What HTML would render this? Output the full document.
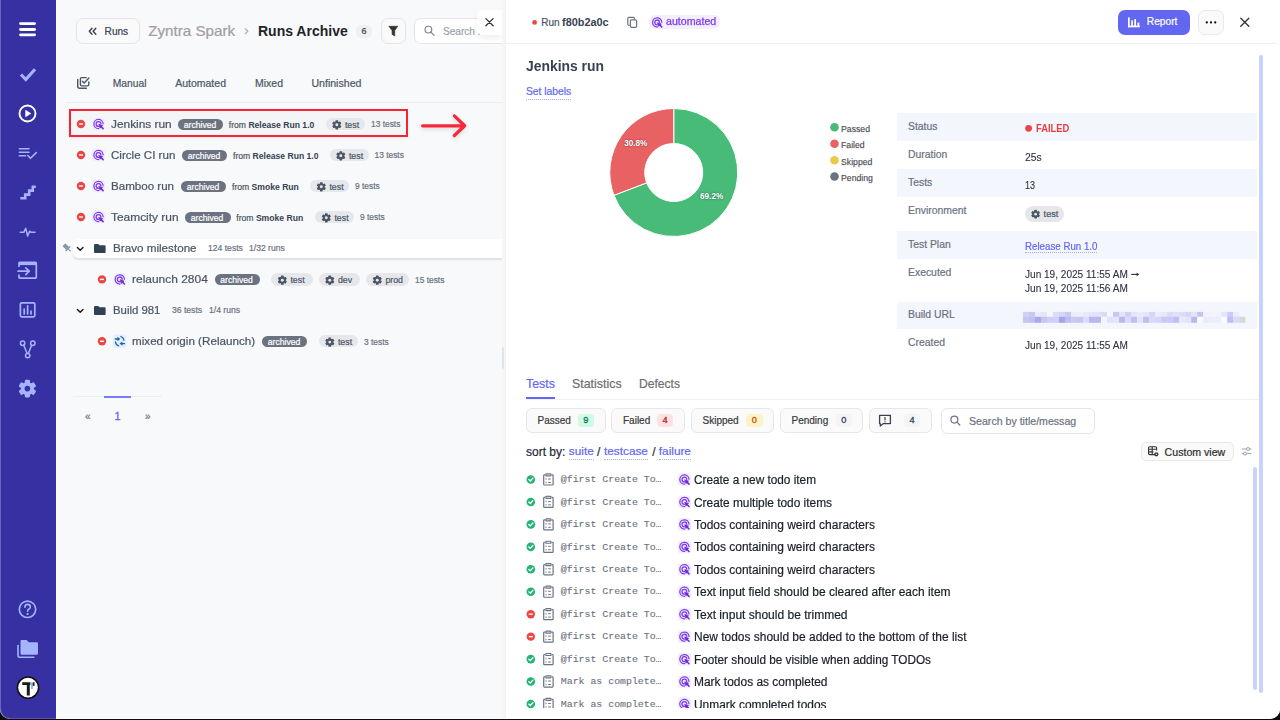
<!DOCTYPE html>
<html><head><meta charset="utf-8">
<style>
*{margin:0;padding:0;box-sizing:border-box}
html,body{width:1280px;height:720px;overflow:hidden;background:#0d0d0d;font-family:"Liberation Sans",sans-serif}
#win{position:absolute;left:0;top:0;width:1280px;height:719px;background:#f8f9fb;border-radius:0 0 10px 10px;overflow:hidden}
.a{position:absolute;white-space:nowrap;line-height:1;-webkit-text-stroke:0.2px currentColor}
svg{position:absolute;overflow:visible}
#side{position:absolute;left:0;top:0;width:56px;height:719px;background:#3730a3;border-left:1px solid #6a63c0;border-bottom:1px solid #5a52b8;border-bottom-left-radius:10px}
#sidee{position:absolute;left:56px;top:0;width:1px;height:719px;background:#fdfdff}
#right{position:absolute;left:505px;top:0;width:775px;height:719px;background:#fff;border-left:1px solid #f3f3f4}
</style></head><body>
<div id="win">
<div id="left">
<div class="a" style="left:76px;top:18px;width:64px;height:26px;border:1px solid #e4e5e8;border-radius:7px;background:#fafafa"></div>
<svg style="left:0;top:0" width="1" height="1"><path d="M92 28.3L89.3 31.3L92 34.3M95.8 28.3L93.1 31.3L95.8 34.3" fill="none" stroke="#374151" stroke-width="1.4" stroke-linecap="round" stroke-linejoin="round"/></svg>
<div class="a" style="left:104.60px;top:26.75px;font-size:10.1px;color:#374151;font-weight:400;">Runs</div>
<div class="a" style="left:148.20px;top:23.10px;font-size:15.2px;color:#a0a0a0;font-weight:400;">Zyntra Spark</div>
<svg style="left:0;top:0" width="1" height="1"><path d="M245.3 28.9L247.8 31.3L245.3 33.7" fill="none" stroke="#9ca3af" stroke-width="1.1" stroke-linecap="round"/></svg>
<div class="a" style="left:258.00px;top:24.28px;font-size:14px;color:#222327;font-weight:700;-webkit-text-stroke:0;">Runs Archive</div>
<div class="a" style="left:356px;top:24.5px;width:16px;height:13.299999999999997px;background:#eff0f2;border-radius:5px"></div>
<div class="a" style="left:361.60px;top:27.28px;font-size:9px;color:#374151;font-weight:400;">6</div>
<div class="a" style="left:381px;top:18px;width:25px;height:26px;border:1px solid #e4e5e8;border-radius:7px;background:#fafafa"></div>
<svg style="left:0;top:0" width="1" height="1"><path d="M388.9 26.3H397.7L394.7 30.6V36L392.1 34.4V30.6Z" fill="#333" stroke="#333" stroke-width="0.7" stroke-linejoin="round"/></svg>
<div class="a" style="left:414px;top:18px;width:106px;height:26px;border:1px solid #e4e5e8;border-radius:7px;background:#fff"></div>
<svg style="left:0;top:0" width="1" height="1"><circle cx="428.4" cy="29.6" r="3.4" fill="none" stroke="#7b8190" stroke-width="1.15"/><path d="M430.9 32.1L434.2 35.4" stroke="#7b8190" stroke-width="1.15" stroke-linecap="round"/></svg>
<div class="a" style="left:443.00px;top:27.15px;font-size:10.1px;color:#9ca3af;font-weight:400;">Search r</div>
<div class="a" style="left:477px;top:10px;width:25px;height:25px;background:#fff;border-radius:5px 0 0 5px;box-shadow:0 3px 6px rgba(0,0,0,0.07)"></div>
<svg style="left:0;top:0" width="1" height="1"><path d="M485.9 18.6L493.1 25.8M493.1 18.6L485.9 25.8" stroke="#333" stroke-width="1.3" stroke-linecap="round"/></svg>
<svg style="left:0;top:0" width="1" height="1"><g fill="none" stroke="#4b5563" stroke-width="1.4" stroke-linecap="round" stroke-linejoin="round"><path d="M77.7 79.5V86.3Q77.7 88.2 79.6 88.2H86.4"/><path d="M86.2 77.6H81.7Q80.4 77.6 80.4 78.9V84.6Q80.4 85.9 81.7 85.9H87.5Q88.8 85.9 88.8 84.6V82"/><path d="M82.4 81.2L84.2 83L88.9 78"/></g></svg>
<div class="a" style="left:112.80px;top:78.66px;font-size:10.3px;color:#4b5563;font-weight:400;">Manual</div>
<div class="a" style="left:175.20px;top:77.86px;font-size:10.5px;color:#4b5563;font-weight:400;">Automated</div>
<div class="a" style="left:255.00px;top:77.86px;font-size:10.5px;color:#4b5563;font-weight:400;">Mixed</div>
<div class="a" style="left:311.40px;top:77.81px;font-size:10.6px;color:#4b5563;font-weight:400;">Unfinished</div>
<div class="a" style="left:66px;top:102px;width:437px;height:1px;background:#eceef1"></div>
<div class="a" style="left:69px;top:109px;width:339px;height:28px;border:2.7px solid #f62236;background:#f4f5f7;box-shadow:0 1px 3px rgba(0,0,0,0.08)"></div>
<div class="a" style="left:111.40px;top:118.86px;font-size:10.7px;color:#4b5563;font-weight:400;transform-origin:0 0;transform:scaleX(1.1111);">Jenkins run</div>
<div class="a" style="left:178px;top:118.5px;width:45px;height:11.0px;background:#6b7280;border-radius:6px"></div>
<div class="a" style="left:183.80px;top:120.67px;font-size:8.6px;color:#fff;font-weight:400;">archived</div>
<div class="a" style="left:228.80px;top:120.57px;font-size:8.6px;color:#4b5563;font-weight:400;">from <b style="color:#374151;-webkit-text-stroke:0">Release Run 1.0</b></div>
<div class="a" style="left:325.5px;top:117.8px;width:39.0px;height:12.399999999999991px;background:#e5e7eb;border-radius:7px"></div>
<svg style="left:0;top:0" width="1" height="1"><g transform="translate(336.8 124.8) scale(0.523)" fill="#4b5563"><rect x="-2.6" y="-8.8" width="5.2" height="4.4" rx="1.1" transform="rotate(0)"/><rect x="-2.6" y="-8.8" width="5.2" height="4.4" rx="1.1" transform="rotate(60)"/><rect x="-2.6" y="-8.8" width="5.2" height="4.4" rx="1.1" transform="rotate(120)"/><rect x="-2.6" y="-8.8" width="5.2" height="4.4" rx="1.1" transform="rotate(180)"/><rect x="-2.6" y="-8.8" width="5.2" height="4.4" rx="1.1" transform="rotate(240)"/><rect x="-2.6" y="-8.8" width="5.2" height="4.4" rx="1.1" transform="rotate(300)"/><circle r="6.5"/><circle r="2.8" fill="#e5e7eb"/></g></svg>
<div class="a" style="left:344.90px;top:120.68px;font-size:8.8px;color:#4b5563;font-weight:400;">test</div>
<div class="a" style="left:371.00px;top:120.27px;font-size:8.4px;color:#6b7280;font-weight:400;">13 tests</div>
<div class="a" style="left:111.40px;top:149.86px;font-size:10.7px;color:#4b5563;font-weight:400;transform-origin:0 0;transform:scaleX(1.0831);">Circle CI run</div>
<div class="a" style="left:182px;top:149.5px;width:45px;height:11.0px;background:#6b7280;border-radius:6px"></div>
<div class="a" style="left:187.80px;top:151.67px;font-size:8.6px;color:#fff;font-weight:400;">archived</div>
<div class="a" style="left:233.00px;top:151.57px;font-size:8.6px;color:#4b5563;font-weight:400;">from <b style="color:#374151;-webkit-text-stroke:0">Release Run 1.0</b></div>
<div class="a" style="left:329.5px;top:148.8px;width:39.5px;height:12.399999999999977px;background:#e5e7eb;border-radius:7px"></div>
<svg style="left:0;top:0" width="1" height="1"><g transform="translate(340.8 155.8) scale(0.523)" fill="#4b5563"><rect x="-2.6" y="-8.8" width="5.2" height="4.4" rx="1.1" transform="rotate(0)"/><rect x="-2.6" y="-8.8" width="5.2" height="4.4" rx="1.1" transform="rotate(60)"/><rect x="-2.6" y="-8.8" width="5.2" height="4.4" rx="1.1" transform="rotate(120)"/><rect x="-2.6" y="-8.8" width="5.2" height="4.4" rx="1.1" transform="rotate(180)"/><rect x="-2.6" y="-8.8" width="5.2" height="4.4" rx="1.1" transform="rotate(240)"/><rect x="-2.6" y="-8.8" width="5.2" height="4.4" rx="1.1" transform="rotate(300)"/><circle r="6.5"/><circle r="2.8" fill="#e5e7eb"/></g></svg>
<div class="a" style="left:348.90px;top:151.68px;font-size:8.8px;color:#4b5563;font-weight:400;">test</div>
<div class="a" style="left:374.50px;top:151.27px;font-size:8.4px;color:#6b7280;font-weight:400;">13 tests</div>
<div class="a" style="left:111.40px;top:180.86px;font-size:10.7px;color:#4b5563;font-weight:400;transform-origin:0 0;transform:scaleX(1.0825);">Bamboo run</div>
<div class="a" style="left:181px;top:180.5px;width:44.80000000000001px;height:11.0px;background:#6b7280;border-radius:6px"></div>
<div class="a" style="left:186.80px;top:182.67px;font-size:8.6px;color:#fff;font-weight:400;">archived</div>
<div class="a" style="left:232.00px;top:182.57px;font-size:8.6px;color:#4b5563;font-weight:400;">from <b style="color:#374151;-webkit-text-stroke:0">Smoke Run</b></div>
<div class="a" style="left:310px;top:179.8px;width:39px;height:12.399999999999977px;background:#e5e7eb;border-radius:7px"></div>
<svg style="left:0;top:0" width="1" height="1"><g transform="translate(321.3 186.8) scale(0.523)" fill="#4b5563"><rect x="-2.6" y="-8.8" width="5.2" height="4.4" rx="1.1" transform="rotate(0)"/><rect x="-2.6" y="-8.8" width="5.2" height="4.4" rx="1.1" transform="rotate(60)"/><rect x="-2.6" y="-8.8" width="5.2" height="4.4" rx="1.1" transform="rotate(120)"/><rect x="-2.6" y="-8.8" width="5.2" height="4.4" rx="1.1" transform="rotate(180)"/><rect x="-2.6" y="-8.8" width="5.2" height="4.4" rx="1.1" transform="rotate(240)"/><rect x="-2.6" y="-8.8" width="5.2" height="4.4" rx="1.1" transform="rotate(300)"/><circle r="6.5"/><circle r="2.8" fill="#e5e7eb"/></g></svg>
<div class="a" style="left:329.40px;top:182.68px;font-size:8.8px;color:#4b5563;font-weight:400;">test</div>
<div class="a" style="left:355.00px;top:182.27px;font-size:8.4px;color:#6b7280;font-weight:400;">9 tests</div>
<div class="a" style="left:111.40px;top:211.86px;font-size:10.7px;color:#4b5563;font-weight:400;transform-origin:0 0;transform:scaleX(1.1145);">Teamcity run</div>
<div class="a" style="left:185px;top:211.5px;width:45.5px;height:11.0px;background:#6b7280;border-radius:6px"></div>
<div class="a" style="left:190.80px;top:213.67px;font-size:8.6px;color:#fff;font-weight:400;">archived</div>
<div class="a" style="left:236.30px;top:213.57px;font-size:8.6px;color:#4b5563;font-weight:400;">from <b style="color:#374151;-webkit-text-stroke:0">Smoke Run</b></div>
<div class="a" style="left:315px;top:210.8px;width:39px;height:12.399999999999977px;background:#e5e7eb;border-radius:7px"></div>
<svg style="left:0;top:0" width="1" height="1"><g transform="translate(326.3 217.8) scale(0.523)" fill="#4b5563"><rect x="-2.6" y="-8.8" width="5.2" height="4.4" rx="1.1" transform="rotate(0)"/><rect x="-2.6" y="-8.8" width="5.2" height="4.4" rx="1.1" transform="rotate(60)"/><rect x="-2.6" y="-8.8" width="5.2" height="4.4" rx="1.1" transform="rotate(120)"/><rect x="-2.6" y="-8.8" width="5.2" height="4.4" rx="1.1" transform="rotate(180)"/><rect x="-2.6" y="-8.8" width="5.2" height="4.4" rx="1.1" transform="rotate(240)"/><rect x="-2.6" y="-8.8" width="5.2" height="4.4" rx="1.1" transform="rotate(300)"/><circle r="6.5"/><circle r="2.8" fill="#e5e7eb"/></g></svg>
<div class="a" style="left:334.40px;top:213.68px;font-size:8.8px;color:#4b5563;font-weight:400;">test</div>
<div class="a" style="left:360.00px;top:213.27px;font-size:8.4px;color:#6b7280;font-weight:400;">9 tests</div>
<div class="a" style="left:73px;top:238.5px;width:430px;height:19.5px;background:#fff;border-radius:5px 0 0 5px;box-shadow:0 1.5px 2px rgba(0,0,0,0.10)"></div>
<div class="a" style="left:112.50px;top:243.06px;font-size:10.7px;color:#4b5563;font-weight:400;transform-origin:0 0;transform:scaleX(1.0910);">Bravo milestone</div>
<div class="a" style="left:208.00px;top:244.37px;font-size:8.6px;color:#6b7280;font-weight:400;">124 tests</div>
<div class="a" style="left:249.00px;top:244.37px;font-size:8.6px;color:#6b7280;font-weight:400;">1/32 runs</div>
<div class="a" style="left:132.20px;top:274.22px;font-size:10.8px;color:#4b5563;font-weight:400;transform-origin:0 0;transform:scaleX(1.1073);">relaunch 2804</div>
<div class="a" style="left:214.5px;top:273.9px;width:45.5px;height:11.0px;background:#6b7280;border-radius:6px"></div>
<div class="a" style="left:220.30px;top:276.07px;font-size:8.6px;color:#fff;font-weight:400;">archived</div>
<div class="a" style="left:271px;top:273.2px;width:41.5px;height:12.399999999999977px;background:#e5e7eb;border-radius:7px"></div>
<svg style="left:0;top:0" width="1" height="1"><g transform="translate(282.3 280.2) scale(0.523)" fill="#4b5563"><rect x="-2.6" y="-8.8" width="5.2" height="4.4" rx="1.1" transform="rotate(0)"/><rect x="-2.6" y="-8.8" width="5.2" height="4.4" rx="1.1" transform="rotate(60)"/><rect x="-2.6" y="-8.8" width="5.2" height="4.4" rx="1.1" transform="rotate(120)"/><rect x="-2.6" y="-8.8" width="5.2" height="4.4" rx="1.1" transform="rotate(180)"/><rect x="-2.6" y="-8.8" width="5.2" height="4.4" rx="1.1" transform="rotate(240)"/><rect x="-2.6" y="-8.8" width="5.2" height="4.4" rx="1.1" transform="rotate(300)"/><circle r="6.5"/><circle r="2.8" fill="#e5e7eb"/></g></svg>
<div class="a" style="left:290.40px;top:276.08px;font-size:8.8px;color:#4b5563;font-weight:400;">test</div>
<div class="a" style="left:318.5px;top:273.2px;width:41.5px;height:12.399999999999977px;background:#e5e7eb;border-radius:7px"></div>
<svg style="left:0;top:0" width="1" height="1"><g transform="translate(329.8 280.2) scale(0.523)" fill="#4b5563"><rect x="-2.6" y="-8.8" width="5.2" height="4.4" rx="1.1" transform="rotate(0)"/><rect x="-2.6" y="-8.8" width="5.2" height="4.4" rx="1.1" transform="rotate(60)"/><rect x="-2.6" y="-8.8" width="5.2" height="4.4" rx="1.1" transform="rotate(120)"/><rect x="-2.6" y="-8.8" width="5.2" height="4.4" rx="1.1" transform="rotate(180)"/><rect x="-2.6" y="-8.8" width="5.2" height="4.4" rx="1.1" transform="rotate(240)"/><rect x="-2.6" y="-8.8" width="5.2" height="4.4" rx="1.1" transform="rotate(300)"/><circle r="6.5"/><circle r="2.8" fill="#e5e7eb"/></g></svg>
<div class="a" style="left:337.90px;top:276.08px;font-size:8.8px;color:#4b5563;font-weight:400;">dev</div>
<div class="a" style="left:366px;top:273.2px;width:43px;height:12.399999999999977px;background:#e5e7eb;border-radius:7px"></div>
<svg style="left:0;top:0" width="1" height="1"><g transform="translate(377.3 280.2) scale(0.523)" fill="#4b5563"><rect x="-2.6" y="-8.8" width="5.2" height="4.4" rx="1.1" transform="rotate(0)"/><rect x="-2.6" y="-8.8" width="5.2" height="4.4" rx="1.1" transform="rotate(60)"/><rect x="-2.6" y="-8.8" width="5.2" height="4.4" rx="1.1" transform="rotate(120)"/><rect x="-2.6" y="-8.8" width="5.2" height="4.4" rx="1.1" transform="rotate(180)"/><rect x="-2.6" y="-8.8" width="5.2" height="4.4" rx="1.1" transform="rotate(240)"/><rect x="-2.6" y="-8.8" width="5.2" height="4.4" rx="1.1" transform="rotate(300)"/><circle r="6.5"/><circle r="2.8" fill="#e5e7eb"/></g></svg>
<div class="a" style="left:385.40px;top:276.08px;font-size:8.8px;color:#4b5563;font-weight:400;">prod</div>
<div class="a" style="left:415.00px;top:275.67px;font-size:8.4px;color:#6b7280;font-weight:400;">15 tests</div>
<div class="a" style="left:112.50px;top:305.06px;font-size:10.7px;color:#4b5563;font-weight:400;transform-origin:0 0;transform:scaleX(1.0645);">Build 981</div>
<div class="a" style="left:172.00px;top:306.37px;font-size:8.6px;color:#6b7280;font-weight:400;">36 tests</div>
<div class="a" style="left:209.00px;top:306.37px;font-size:8.6px;color:#6b7280;font-weight:400;">1/4 runs</div>
<div class="a" style="left:132.20px;top:336.16px;font-size:10.7px;color:#4b5563;font-weight:400;transform-origin:0 0;transform:scaleX(1.0912);">mixed origin (Relaunch)</div>
<div class="a" style="left:262px;top:335.8px;width:45px;height:11.0px;background:#6b7280;border-radius:6px"></div>
<div class="a" style="left:267.80px;top:337.97px;font-size:8.6px;color:#fff;font-weight:400;">archived</div>
<div class="a" style="left:318.5px;top:335.1px;width:39.0px;height:12.399999999999977px;background:#e5e7eb;border-radius:7px"></div>
<svg style="left:0;top:0" width="1" height="1"><g transform="translate(329.8 342.1) scale(0.523)" fill="#4b5563"><rect x="-2.6" y="-8.8" width="5.2" height="4.4" rx="1.1" transform="rotate(0)"/><rect x="-2.6" y="-8.8" width="5.2" height="4.4" rx="1.1" transform="rotate(60)"/><rect x="-2.6" y="-8.8" width="5.2" height="4.4" rx="1.1" transform="rotate(120)"/><rect x="-2.6" y="-8.8" width="5.2" height="4.4" rx="1.1" transform="rotate(180)"/><rect x="-2.6" y="-8.8" width="5.2" height="4.4" rx="1.1" transform="rotate(240)"/><rect x="-2.6" y="-8.8" width="5.2" height="4.4" rx="1.1" transform="rotate(300)"/><circle r="6.5"/><circle r="2.8" fill="#e5e7eb"/></g></svg>
<div class="a" style="left:337.90px;top:337.98px;font-size:8.8px;color:#4b5563;font-weight:400;">test</div>
<div class="a" style="left:364.00px;top:337.57px;font-size:8.4px;color:#6b7280;font-weight:400;">3 tests</div>
<svg style="left:0;top:0" width="1" height="1"><circle cx="81" cy="124" r="4.2" fill="#ef4444"/><rect x="79" y="123.3" width="4" height="1.4" fill="#fff"/><rect x="91.9" y="117.6" width="13.2" height="13" rx="3.5" fill="#f3eefe"/><g fill="none" stroke="#7c3aed" stroke-width="1.25" stroke-linecap="round"><path d="M103.1 123.8A4.6 4.6 0 1 0 98.7 128.6"/><path d="M100.9 123.9A2.4 2.4 0 1 0 98.6 126.4"/><path d="M101.1 126.6L103.1 128.6" stroke="#6d28d9" stroke-width="1.5"/></g><path d="M98.7 124.2L102.7 125.5L100.0 128.2Z" fill="#6d28d9" stroke="#6d28d9" stroke-width="0.6" stroke-linejoin="round"/><circle cx="81" cy="155" r="4.2" fill="#ef4444"/><rect x="79" y="154.3" width="4" height="1.4" fill="#fff"/><rect x="91.9" y="148.6" width="13.2" height="13" rx="3.5" fill="#f3eefe"/><g fill="none" stroke="#7c3aed" stroke-width="1.25" stroke-linecap="round"><path d="M103.1 154.8A4.6 4.6 0 1 0 98.7 159.6"/><path d="M100.9 154.9A2.4 2.4 0 1 0 98.6 157.4"/><path d="M101.1 157.6L103.1 159.6" stroke="#6d28d9" stroke-width="1.5"/></g><path d="M98.7 155.2L102.7 156.5L100.0 159.2Z" fill="#6d28d9" stroke="#6d28d9" stroke-width="0.6" stroke-linejoin="round"/><circle cx="81" cy="186" r="4.2" fill="#ef4444"/><rect x="79" y="185.3" width="4" height="1.4" fill="#fff"/><rect x="91.9" y="179.6" width="13.2" height="13" rx="3.5" fill="#f3eefe"/><g fill="none" stroke="#7c3aed" stroke-width="1.25" stroke-linecap="round"><path d="M103.1 185.8A4.6 4.6 0 1 0 98.7 190.6"/><path d="M100.9 185.9A2.4 2.4 0 1 0 98.6 188.4"/><path d="M101.1 188.6L103.1 190.6" stroke="#6d28d9" stroke-width="1.5"/></g><path d="M98.7 186.2L102.7 187.5L100.0 190.2Z" fill="#6d28d9" stroke="#6d28d9" stroke-width="0.6" stroke-linejoin="round"/><circle cx="81" cy="217" r="4.2" fill="#ef4444"/><rect x="79" y="216.3" width="4" height="1.4" fill="#fff"/><rect x="91.9" y="210.6" width="13.2" height="13" rx="3.5" fill="#f3eefe"/><g fill="none" stroke="#7c3aed" stroke-width="1.25" stroke-linecap="round"><path d="M103.1 216.8A4.6 4.6 0 1 0 98.7 221.6"/><path d="M100.9 216.9A2.4 2.4 0 1 0 98.6 219.4"/><path d="M101.1 219.6L103.1 221.6" stroke="#6d28d9" stroke-width="1.5"/></g><path d="M98.7 217.2L102.7 218.5L100.0 221.2Z" fill="#6d28d9" stroke="#6d28d9" stroke-width="0.6" stroke-linejoin="round"/><path d="M65.2 244.6L69.8 249.2L68.2 249.8L66 252.3L70.7 252.3" fill="none"/><g transform="translate(67 247.8) rotate(-45)" fill="#8b95a5"><rect x="-2" y="-4.4" width="4" height="5.4" rx="0.6"/><rect x="-3.3" y="0.6" width="6.6" height="1.4" rx="0.5"/><rect x="-0.5" y="1.8" width="1" height="3.4"/></g><path d="M77.39999999999999 247.5L80.2 250.3L83.0 247.5" fill="none" stroke="#111" stroke-width="1.35" stroke-linecap="round" stroke-linejoin="round"/><path d="M94 244.9Q94 243.9 95 243.9H98.2L99.6 245.3H104.6Q105.6 245.3 105.6 246.3V251.9Q105.6 252.9 104.6 252.9H95Q94 252.9 94 251.9Z" fill="#334155"/><circle cx="102" cy="279.4" r="4.2" fill="#ef4444"/><rect x="100" y="278.7" width="4" height="1.4" fill="#fff"/><rect x="113.2" y="273.0" width="13.2" height="13" rx="3.5" fill="#f3eefe"/><g fill="none" stroke="#7c3aed" stroke-width="1.25" stroke-linecap="round"><path d="M124.39999999999999 279.2A4.6 4.6 0 1 0 120.0 284.0"/><path d="M122.2 279.29999999999995A2.4 2.4 0 1 0 119.89999999999999 281.79999999999995"/><path d="M122.39999999999999 282.0L124.39999999999999 284.0" stroke="#6d28d9" stroke-width="1.5"/></g><path d="M120.0 279.59999999999997L124.0 280.9L121.3 283.59999999999997Z" fill="#6d28d9" stroke="#6d28d9" stroke-width="0.6" stroke-linejoin="round"/><path d="M77.39999999999999 309.5L80.2 312.3L83.0 309.5" fill="none" stroke="#111" stroke-width="1.35" stroke-linecap="round" stroke-linejoin="round"/><path d="M94 306.9Q94 305.9 95 305.9H98.2L99.6 307.29999999999995H104.6Q105.6 307.29999999999995 105.6 308.29999999999995V313.9Q105.6 314.9 104.6 314.9H95Q94 314.9 94 313.9Z" fill="#334155"/><circle cx="102" cy="341.3" r="4.2" fill="#ef4444"/><rect x="100" y="340.6" width="4" height="1.4" fill="#fff"/><rect x="112.8" y="334.5" width="13.6" height="13.8" rx="3.5" fill="#e3f0fd"/><g fill="none" stroke="#1e63b0" stroke-width="1.3" stroke-linecap="round"><path d="M115.2 339H118.2"/><path d="M120.9 336.5A4.4 4.4 0 0 1 123.9 340.1"/><path d="M124.6 343.6H121.6"/><path d="M115.5 342A4.4 4.4 0 0 0 118.6 345.8"/></g><path d="M117.4 336.8L120.3 339L117.4 341.2Z M122.4 341.4L119.5 343.6L122.4 345.8Z" fill="#1e63b0"/></svg>
<svg style="left:0;top:0" width="1" height="1"><path d="M422.6 125.8H464.6M454.4 115.9L464.6 125.8L454.4 135.5" fill="none" stroke="#f8283a" stroke-width="3.3" stroke-linecap="round" stroke-linejoin="round" style="filter:drop-shadow(0 2px 2px rgba(0,0,0,0.12))"/></svg>
<div class="a" style="left:73px;top:396px;width:89px;height:1px;background:#eceef1"></div>
<div class="a" style="left:104px;top:396px;width:27px;height:2px;background:#7a7df2"></div>
<div class="a" style="left:85.00px;top:412.20px;font-size:10px;color:#6b7280;font-weight:400;">«</div>
<div class="a" style="left:114.60px;top:411.42px;font-size:10.8px;color:#6366f1;font-weight:400;-webkit-text-stroke:0.3px #6366f1;">1</div>
<div class="a" style="left:145.00px;top:412.20px;font-size:10px;color:#6b7280;font-weight:400;">»</div>
<div class="a" style="left:502px;top:0px;width:3px;height:719px;background:#f6f6f6"></div>
<div class="a" style="left:502px;top:347px;width:2px;height:22px;background:#e2e4e8;border-radius:1px"></div>
</div>
<div id="side"><svg width="56" height="719" style="left:-1px;top:0" viewBox="0 0 56 719">
<g fill="none" stroke-linecap="round" stroke-linejoin="round">
<!-- hamburger -->
<path d="M20.5 23.6H34.6M20.5 29.5H34.6M20.5 34.8H34.6" stroke="#fff" stroke-width="2.8"/>
<!-- check -->
<path d="M21 74.5L25.8 79.5L35 69.2" stroke="#a5b4fc" stroke-width="3.2" stroke-linecap="butt" stroke-linejoin="miter"/>
<!-- play circle -->
<circle cx="27.5" cy="113.5" r="8" stroke="#fff" stroke-width="1.9"/>
<path d="M25.3 109.8L31.3 113.5L25.3 117.2Z" fill="#fff" stroke="none"/>
<!-- list check -->
<path d="M19.3 148.7H29M19.3 152.2H29M19.3 155.7H25.5" stroke="#a5b4fc" stroke-width="1.5"/>
<path d="M27.8 155.5L30.5 158.3L36.3 152.6" stroke="#a5b4fc" stroke-width="1.6"/>
<!-- stairs -->
<path d="M20.3 198.3H25.2V194.6H29.2V190.6H32.8V186.7H35.8" stroke="#a5b4fc" stroke-width="2.6" stroke-linecap="butt" stroke-linejoin="miter"/>
<!-- pulse -->
<path d="M20.3 232.3H23.8L25.7 228.4L27.7 236L29.6 231.2L31.2 232.3H35.1" stroke="#a5b4fc" stroke-width="1.5"/>
<!-- import -->
<path d="M19 266.3V263.2Q19 262.4 19.8 262.4H35.5Q36.3 262.4 36.3 263.2V277.3Q36.3 278.2 35.5 278.2H19.8Q19 278.2 19 277.3V275.2" stroke="#a5b4fc" stroke-width="1.7"/>
<path d="M19 263.8H36.3" stroke="#a5b4fc" stroke-width="2.6" stroke-linecap="butt"/>
<path d="M18.2 271.2H29.2M25.8 267.9L29.2 271.2L25.8 274.6" stroke="#a5b4fc" stroke-width="1.7"/>
<!-- bar chart -->
<rect x="20.4" y="302.8" width="14.4" height="14" rx="1.2" stroke="#a5b4fc" stroke-width="1.7"/>
<path d="M24.2 314V309.2M27.6 314V305.8M31 314V311" stroke="#a5b4fc" stroke-width="1.7"/>
<!-- branch -->
<circle cx="22.6" cy="343.3" r="2.2" stroke="#a5b4fc" stroke-width="1.5"/>
<circle cx="32.8" cy="343.3" r="2.2" stroke="#a5b4fc" stroke-width="1.5"/>
<circle cx="27.7" cy="355.6" r="2.2" stroke="#a5b4fc" stroke-width="1.5"/>
<path d="M23.8 345.3L27 353.3M31.6 345.3L28.4 353.3" stroke="#a5b4fc" stroke-width="1.5"/>
<!-- help -->
<circle cx="27.5" cy="609.3" r="8.2" stroke="#a5b4fc" stroke-width="1.6"/>
<path d="M24.9 607.2Q24.9 604.4 27.6 604.4Q30.3 604.4 30.3 606.9Q30.3 608.4 28.6 609.2Q27.6 609.7 27.6 611.2" stroke="#a5b4fc" stroke-width="1.6"/>
</g>
<circle cx="27.6" cy="614" r="1.1" fill="#a5b4fc"/>
<!-- gear -->
<g transform="translate(27.4 388.6)" fill="#a5b4fc"><rect x="-2.6" y="-8.8" width="5.2" height="4.4" rx="1.1" transform="rotate(0)"/><rect x="-2.6" y="-8.8" width="5.2" height="4.4" rx="1.1" transform="rotate(60)"/><rect x="-2.6" y="-8.8" width="5.2" height="4.4" rx="1.1" transform="rotate(120)"/><rect x="-2.6" y="-8.8" width="5.2" height="4.4" rx="1.1" transform="rotate(180)"/><rect x="-2.6" y="-8.8" width="5.2" height="4.4" rx="1.1" transform="rotate(240)"/><rect x="-2.6" y="-8.8" width="5.2" height="4.4" rx="1.1" transform="rotate(300)"/><circle r="6.5"/><circle r="2.8" fill="#3730a3"/></g>
<!-- folder -->
<path d="M20.5 641Q20.5 640 21.5 640H26.6L28.8 642.3H36.6Q38 642.3 38 643.6V653.6Q38 654.8 36.6 654.8H21.9Q20.5 654.8 20.5 653.6Z" fill="#a5b4fc"/>
<path d="M18 645V655.6Q18 657.3 19.6 657.3H34.4" fill="none" stroke="#a5b4fc" stroke-width="1.6"/>
<!-- avatar -->
<circle cx="28" cy="687.6" r="10.6" fill="#fff" stroke="#111" stroke-width="1.5"/>
<path d="M22.2 682.3H30.4V685H29.8V695.6H26.8V685H22.2Z" fill="#1a1a1a"/>
<rect x="31.2" y="682.3" width="1.6" height="6.6" fill="#7aa7f7"/>
<rect x="32.8" y="682.3" width="1.8" height="3.6" fill="#2a2a2a"/>
</svg></div>
<div id="sidee"></div>
<div id="right"></div>
<div id="rc">
<svg style="left:0;top:0" width="1" height="1"><circle cx="534.6" cy="22.4" r="2.4" fill="#ef4444"/><g fill="none" stroke="#6b7280" stroke-width="1.2" stroke-linejoin="round"><path d="M629.6 25.4H628.9Q627.8 25.4 627.8 24.3V18.3Q627.8 17.3 628.9 17.3H633.4Q634.4 17.3 634.4 18.3V19.2"/><rect x="630.4" y="19.8" width="6.2" height="7.6" rx="1.1"/></g></svg>
<div class="a" style="left:541.20px;top:18.10px;font-size:10px;color:#4b5563;font-weight:400;">Run</div>
<div class="a" style="left:562.00px;top:16.97px;font-size:10.9px;color:#374151;font-weight:700;-webkit-text-stroke:0;">f80b2a0c</div>
<div class="a" style="left:649.3px;top:15.2px;width:70.70000000000005px;height:13.900000000000002px;background:#f3effe;border-radius:6px"></div>
<svg style="left:0;top:0" width="1" height="1"><g fill="none" stroke="#7c3aed" stroke-width="1.25" stroke-linecap="round"><path d="M661.8000000000001 22.2A4.6 4.6 0 1 0 657.4000000000001 27.0"/><path d="M659.6 22.299999999999997A2.4 2.4 0 1 0 657.3000000000001 24.799999999999997"/><path d="M659.8000000000001 25.0L661.8000000000001 27.0" stroke="#6d28d9" stroke-width="1.5"/></g><path d="M657.4000000000001 22.599999999999998L661.4000000000001 23.9L658.7 26.599999999999998Z" fill="#6d28d9" stroke="#6d28d9" stroke-width="0.6" stroke-linejoin="round"/></svg>
<div class="a" style="left:666.10px;top:17.41px;font-size:10.4px;color:#7c3aed;font-weight:400;transform-origin:0 0;transform:scaleX(1.0235);-webkit-text-stroke:0.25px #7c3aed;">automated</div>
<div class="a" style="left:1118px;top:10px;width:72px;height:25px;background:#6366f1;border-radius:7px"></div>
<svg style="left:0;top:0" width="1" height="1"><g fill="#fff"><rect x="1128" y="17.4" width="1.7" height="9.9"/><rect x="1128" y="25.6" width="11.9" height="1.7"/><rect x="1131.2" y="20.4" width="1.7" height="6"/><rect x="1134.3" y="19" width="1.7" height="7.4"/><rect x="1137.4" y="22.6" width="1.9" height="4"/></g></svg>
<div class="a" style="left:1146.80px;top:17.20px;font-size:10.2px;color:#fff;font-weight:400;-webkit-text-stroke:0.2px #fff;">Report</div>
<div class="a" style="left:1198px;top:10px;width:26px;height:25px;border:1px solid #e8e9ec;border-radius:7px;background:#fafafa"></div>
<svg style="left:0;top:0" width="1" height="1"><g fill="#111"><circle cx="1206.8" cy="22.4" r="1.15"/><circle cx="1211" cy="22.4" r="1.15"/><circle cx="1215.2" cy="22.4" r="1.15"/></g><path d="M1240.8 18.2L1248.8 26.2M1248.8 18.2L1240.8 26.2" stroke="#333" stroke-width="1.35" stroke-linecap="round"/></svg>
<div class="a" style="left:505px;top:43px;width:772px;height:1px;background:#eef0f2"></div>
<div class="a" style="left:526.00px;top:58.10px;font-size:15px;color:#374151;font-weight:700;-webkit-text-stroke:0;transform-origin:0 0;transform:scaleX(0.9264);">Jenkins run</div>
<div class="a" style="left:526.00px;top:86.86px;font-size:10.3px;color:#6366f1;font-weight:400;">Set labels</div>
<div class="a" style="left:526px;top:98.6px;width:45px;height:1.0px;border-top:1px dotted #a5a8f4"></div>
<div class="a" style="left:1258.8px;top:55px;width:4.0px;height:638px;background:#c7d2fe;border-radius:2px"></div>
<svg style="left:0;top:0" width="1" height="1"><path d="M673.75 108.50A64 64 0 1 1 613.95 195.31L646.65 182.84A29 29 0 1 0 673.75 143.50Z" fill="#48bb78" stroke="#fff" stroke-width="1"/><path d="M613.95 195.31A64 64 0 0 1 673.75 108.50L673.75 143.50A29 29 0 0 0 646.65 182.84Z" fill="#e86163" stroke="#fff" stroke-width="1"/><g fill="#48bb78"><circle cx="834.5" cy="127.3" r="4.3"/></g><circle cx="834.5" cy="143.8" r="4.3" fill="#e86163"/><circle cx="834.5" cy="160.2" r="4.3" fill="#ecc94b"/><circle cx="834.5" cy="176.5" r="4.3" fill="#6b7280"/></svg>
<div class="a" style="left:624.20px;top:140.26px;font-size:8.2px;color:#fff;font-weight:700;-webkit-text-stroke:0;text-shadow:0 0 2px rgba(0,0,0,0.55);">30.8%</div>
<div class="a" style="left:700.00px;top:193.26px;font-size:8.2px;color:#fff;font-weight:700;-webkit-text-stroke:0;text-shadow:0 0 2px rgba(0,0,0,0.55);">69.2%</div>
<div class="a" style="left:841.00px;top:125.02px;font-size:8.7px;color:#4a4d52;font-weight:400;-webkit-text-stroke:0.1px #4a4d52;text-shadow:0 0.5px 1px rgba(0,0,0,0.12);">Passed</div>
<div class="a" style="left:841.00px;top:141.32px;font-size:8.7px;color:#4a4d52;font-weight:400;-webkit-text-stroke:0.1px #4a4d52;text-shadow:0 0.5px 1px rgba(0,0,0,0.12);">Failed</div>
<div class="a" style="left:841.00px;top:157.52px;font-size:8.7px;color:#4a4d52;font-weight:400;-webkit-text-stroke:0.1px #4a4d52;text-shadow:0 0.5px 1px rgba(0,0,0,0.12);">Skipped</div>
<div class="a" style="left:841.00px;top:173.82px;font-size:8.7px;color:#4a4d52;font-weight:400;-webkit-text-stroke:0.1px #4a4d52;text-shadow:0 0.5px 1px rgba(0,0,0,0.12);">Pending</div>
<div class="a" style="left:897px;top:113px;width:360px;height:28px;background:#f3f6fd"></div>
<div class="a" style="left:897px;top:169px;width:360px;height:28px;background:#f3f6fd"></div>
<div class="a" style="left:897px;top:231px;width:360px;height:28px;background:#f3f6fd"></div>
<div class="a" style="left:897px;top:301.6px;width:360px;height:27.399999999999977px;background:#f3f6fd"></div>
<div class="a" style="left:908.00px;top:122.01px;font-size:10.4px;color:#6b7280;font-weight:400;">Status</div>
<div class="a" style="left:908.00px;top:150.01px;font-size:10.4px;color:#6b7280;font-weight:400;">Duration</div>
<div class="a" style="left:908.00px;top:178.01px;font-size:10.4px;color:#6b7280;font-weight:400;">Tests</div>
<div class="a" style="left:908.00px;top:206.01px;font-size:10.4px;color:#6b7280;font-weight:400;">Environment</div>
<div class="a" style="left:908.00px;top:240.01px;font-size:10.4px;color:#6b7280;font-weight:400;">Test Plan</div>
<div class="a" style="left:908.00px;top:268.01px;font-size:10.4px;color:#6b7280;font-weight:400;">Executed</div>
<div class="a" style="left:908.00px;top:310.01px;font-size:10.4px;color:#6b7280;font-weight:400;">Build URL</div>
<div class="a" style="left:908.00px;top:338.01px;font-size:10.4px;color:#6b7280;font-weight:400;">Created</div>
<svg style="left:0;top:0" width="1" height="1"><circle cx="1028.6" cy="128.3" r="3.4" fill="#ef4444"/></svg>
<div class="a" style="left:1035.80px;top:123.80px;font-size:10px;color:#e53e3e;font-weight:700;-webkit-text-stroke:0;transform-origin:0 0;transform:scaleX(0.9365);">FAILED</div>
<div class="a" style="left:1024.80px;top:151.82px;font-size:10.8px;color:#2b313b;font-weight:400;transform-origin:0 0;transform:scaleX(0.9533);-webkit-text-stroke:0.1px #2b313b;">25s</div>
<div class="a" style="left:1024.80px;top:179.82px;font-size:10.8px;color:#2b313b;font-weight:400;transform-origin:0 0;transform:scaleX(0.8324);-webkit-text-stroke:0.1px #2b313b;">13</div>
<div class="a" style="left:1024.8px;top:206px;width:39.0px;height:16px;background:#e5e7eb;border-radius:8px"></div>
<svg style="left:0;top:0" width="1" height="1"><g transform="translate(1035.6 214.2) scale(0.500)" fill="#4b5563"><rect x="-2.6" y="-8.8" width="5.2" height="4.4" rx="1.1" transform="rotate(0)"/><rect x="-2.6" y="-8.8" width="5.2" height="4.4" rx="1.1" transform="rotate(60)"/><rect x="-2.6" y="-8.8" width="5.2" height="4.4" rx="1.1" transform="rotate(120)"/><rect x="-2.6" y="-8.8" width="5.2" height="4.4" rx="1.1" transform="rotate(180)"/><rect x="-2.6" y="-8.8" width="5.2" height="4.4" rx="1.1" transform="rotate(240)"/><rect x="-2.6" y="-8.8" width="5.2" height="4.4" rx="1.1" transform="rotate(300)"/><circle r="6.5"/><circle r="2.8" fill="#e5e7eb"/></g></svg>
<div class="a" style="left:1043.60px;top:209.58px;font-size:9.2px;color:#4b5563;font-weight:400;">test</div>
<div class="a" style="left:1024.60px;top:241.11px;font-size:10.6px;color:#6366f1;font-weight:400;transform-origin:0 0;transform:scaleX(0.9181);">Release Run 1.0</div>
<div class="a" style="left:1024.6px;top:252px;width:72.40000000000009px;height:1px;border-top:1px dotted #a5a8f4"></div>
<div class="a" style="left:1024.60px;top:269.12px;font-size:10.8px;color:#2b313b;font-weight:400;transform-origin:0 0;transform:scaleX(0.9321);-webkit-text-stroke:0.1px #2b313b;">Jun 19, 2025 11:55 AM</div>
<svg style="left:0;top:0" width="1" height="1"><path d="M1131.2 274.4H1138.4" stroke="#2b313b" stroke-width="1.1"/><path d="M1136.6 272.6L1139.2 274.4L1136.6 276.2Z" fill="#2b313b"/></svg>
<div class="a" style="left:1024.60px;top:282.52px;font-size:10.8px;color:#2b313b;font-weight:400;transform-origin:0 0;transform:scaleX(0.9321);-webkit-text-stroke:0.1px #2b313b;">Jun 19, 2025 11:56 AM</div>
<div class="a" style="left:1024.60px;top:339.52px;font-size:10.8px;color:#2b313b;font-weight:400;transform-origin:0 0;transform:scaleX(0.9321);-webkit-text-stroke:0.1px #2b313b;">Jun 19, 2025 11:55 AM</div>
<svg style="left:0;top:0" width="1" height="1"><rect x="1022.90" y="311.9" width="6.1" height="5" fill="#d0d0f6"/><rect x="1022.90" y="316.8" width="6.1" height="6" fill="#c5c5f4"/><rect x="1028.91" y="311.9" width="6.1" height="5" fill="#c8c8f4"/><rect x="1028.91" y="316.8" width="6.1" height="6" fill="#bfbff2"/><rect x="1034.92" y="311.9" width="6.1" height="5" fill="#ebebfb"/><rect x="1034.92" y="316.8" width="6.1" height="6" fill="#a9a9ef"/><rect x="1040.93" y="311.9" width="6.1" height="5" fill="#e5e5f9"/><rect x="1040.93" y="316.8" width="6.1" height="6" fill="#c5c5f4"/><rect x="1046.94" y="311.9" width="6.1" height="5" fill="#f5f5fd"/><rect x="1046.94" y="316.8" width="6.1" height="6" fill="#cfcff5"/><rect x="1052.95" y="311.9" width="6.1" height="5" fill="#dcdcf8"/><rect x="1052.95" y="316.8" width="6.1" height="6" fill="#d0d0f6"/><rect x="1058.96" y="311.9" width="6.1" height="5" fill="#d6d6f7"/><rect x="1058.96" y="316.8" width="6.1" height="6" fill="#a3a3ee"/><rect x="1064.97" y="311.9" width="6.1" height="5" fill="#c9c9f4"/><rect x="1064.97" y="316.8" width="6.1" height="6" fill="#bdbdf2"/><rect x="1070.98" y="311.9" width="6.1" height="5" fill="#ececfb"/><rect x="1070.98" y="316.8" width="6.1" height="6" fill="#c9c9f4"/><rect x="1076.99" y="311.9" width="6.1" height="5" fill="#efeffc"/><rect x="1076.99" y="316.8" width="6.1" height="6" fill="#c6c6f4"/><rect x="1083.00" y="311.9" width="6.1" height="5" fill="#e8e8fa"/><rect x="1083.00" y="316.8" width="6.1" height="6" fill="#dcdcf8"/><rect x="1089.01" y="311.9" width="6.1" height="5" fill="#e3e3f9"/><rect x="1089.01" y="316.8" width="6.1" height="6" fill="#b8b8f1"/><rect x="1095.02" y="311.9" width="6.1" height="5" fill="#e3e3f9"/><rect x="1095.02" y="316.8" width="6.1" height="6" fill="#b8b8f1"/><rect x="1101.03" y="311.9" width="6.1" height="5" fill="#dadaf8"/><rect x="1101.03" y="316.8" width="6.1" height="6" fill="#f5f5fd"/><rect x="1107.04" y="311.9" width="6.1" height="5" fill="#f5f5fd"/><rect x="1107.04" y="316.8" width="6.1" height="6" fill="#e1e1f9"/><rect x="1113.05" y="311.9" width="6.1" height="5" fill="#c7c7f4"/><rect x="1113.05" y="316.8" width="6.1" height="6" fill="#e5e5f9"/><rect x="1119.06" y="311.9" width="6.1" height="5" fill="#e3e3f9"/><rect x="1119.06" y="316.8" width="6.1" height="6" fill="#b8b8f1"/><rect x="1125.07" y="311.9" width="6.1" height="5" fill="#d0d0f6"/><rect x="1125.07" y="316.8" width="6.1" height="6" fill="#d9d9f7"/><rect x="1131.08" y="311.9" width="6.1" height="5" fill="#e6e6fa"/><rect x="1131.08" y="316.8" width="6.1" height="6" fill="#c0c0f2"/><rect x="1137.09" y="311.9" width="6.1" height="5" fill="#e9e9fa"/><rect x="1137.09" y="316.8" width="6.1" height="6" fill="#e3e3f9"/><rect x="1143.10" y="311.9" width="6.1" height="5" fill="#e5e5f9"/><rect x="1143.10" y="316.8" width="6.1" height="6" fill="#bfbff2"/><rect x="1149.11" y="311.9" width="6.1" height="5" fill="#d5d5f7"/><rect x="1149.11" y="316.8" width="6.1" height="6" fill="#d9d9f7"/><rect x="1155.12" y="311.9" width="6.1" height="5" fill="#ebebfb"/><rect x="1155.12" y="316.8" width="6.1" height="6" fill="#d5d5f7"/><rect x="1161.13" y="311.9" width="6.1" height="5" fill="#e8e8fa"/><rect x="1161.13" y="316.8" width="6.1" height="6" fill="#c9c9f4"/><rect x="1167.14" y="311.9" width="6.1" height="5" fill="#dadaf8"/><rect x="1167.14" y="316.8" width="6.1" height="6" fill="#c9c9f4"/><rect x="1173.15" y="311.9" width="6.1" height="5" fill="#e0e0f8"/><rect x="1173.15" y="316.8" width="6.1" height="6" fill="#bebef2"/><rect x="1179.16" y="311.9" width="6.1" height="5" fill="#dcdcf8"/><rect x="1179.16" y="316.8" width="6.1" height="6" fill="#e8e8fa"/><rect x="1185.17" y="311.9" width="6.1" height="5" fill="#d5d5f7"/><rect x="1185.17" y="316.8" width="6.1" height="6" fill="#e3e3f9"/><rect x="1191.18" y="311.9" width="6.1" height="5" fill="#e3e3f9"/><rect x="1191.18" y="316.8" width="6.1" height="6" fill="#b8b8f1"/><rect x="1197.19" y="311.9" width="6.1" height="5" fill="#c4c4f3"/><rect x="1197.19" y="316.8" width="6.1" height="6" fill="#f9f9fe"/><rect x="1203.20" y="311.9" width="6.1" height="5" fill="#f3f3fd"/><rect x="1203.20" y="316.8" width="6.1" height="6" fill="#eaeafb"/><rect x="1209.21" y="311.9" width="6.1" height="5" fill="#f3f3fd"/><rect x="1209.21" y="316.8" width="6.1" height="6" fill="#ededfb"/><rect x="1215.22" y="311.9" width="6.1" height="5" fill="#f3f3fd"/><rect x="1215.22" y="316.8" width="6.1" height="6" fill="#ededfb"/><rect x="1221.23" y="311.9" width="6.1" height="5" fill="#e6e6fa"/><rect x="1221.23" y="316.8" width="6.1" height="6" fill="#fbfbfe"/><rect x="1227.24" y="311.9" width="6.1" height="5" fill="#cbcbf5"/><rect x="1227.24" y="316.8" width="6.1" height="6" fill="#bdbdf2"/><rect x="1233.25" y="311.9" width="6.1" height="5" fill="#ececfb"/><rect x="1233.25" y="316.8" width="6.1" height="6" fill="#dadaf8"/><rect x="1239.26" y="316.8" width="6.1" height="6" fill="#d6d8da"/></svg>
<div class="a" style="left:526.00px;top:377.85px;font-size:12.4px;color:#6366f1;font-weight:400;">Tests</div>
<div class="a" style="left:572.00px;top:377.85px;font-size:12.4px;color:#6e6e70;font-weight:400;">Statistics</div>
<div class="a" style="left:639.00px;top:377.99px;font-size:12.1px;color:#6e6e70;font-weight:400;">Defects</div>
<div class="a" style="left:526px;top:398.5px;width:733px;height:1.0px;background:#eef0f2"></div>
<div class="a" style="left:526px;top:397.3px;width:29px;height:2.0px;background:#6366f1"></div>
<div class="a" style="left:525.8px;top:407.5px;width:80.0px;height:25.5px;border:1px solid #e6e7ea;border-radius:6px;background:#fafafa"></div>
<div class="a" style="left:537.50px;top:415.50px;font-size:10px;color:#38393b;font-weight:400;">Passed</div>
<div class="a" style="left:577.5px;top:413.8px;width:16.299999999999955px;height:13.699999999999989px;background:#d1fae5;border-radius:4px"></div>
<div class="a" style="left:583.15px;top:416.28px;font-size:9.2px;color:#047857;font-weight:400;-webkit-text-stroke:0.3px #047857;">9</div>
<div class="a" style="left:611px;top:407.5px;width:73.5px;height:25.5px;border:1px solid #e6e7ea;border-radius:6px;background:#fafafa"></div>
<div class="a" style="left:623.00px;top:415.50px;font-size:10px;color:#38393b;font-weight:400;">Failed</div>
<div class="a" style="left:656.8px;top:413.8px;width:16.200000000000045px;height:13.699999999999989px;background:#fee2e2;border-radius:4px"></div>
<div class="a" style="left:662.40px;top:416.28px;font-size:9.2px;color:#b91c1c;font-weight:400;-webkit-text-stroke:0.3px #b91c1c;">4</div>
<div class="a" style="left:690.5px;top:407.5px;width:83.5px;height:25.5px;border:1px solid #e6e7ea;border-radius:6px;background:#fafafa"></div>
<div class="a" style="left:702.50px;top:415.50px;font-size:10px;color:#38393b;font-weight:400;">Skipped</div>
<div class="a" style="left:746px;top:413.8px;width:16.5px;height:13.699999999999989px;background:#fef3c7;border-radius:4px"></div>
<div class="a" style="left:751.75px;top:416.28px;font-size:9.2px;color:#b45309;font-weight:400;-webkit-text-stroke:0.3px #b45309;">0</div>
<div class="a" style="left:780px;top:407.5px;width:83px;height:25.5px;border:1px solid #e6e7ea;border-radius:6px;background:#fafafa"></div>
<div class="a" style="left:791.50px;top:415.50px;font-size:10px;color:#38393b;font-weight:400;">Pending</div>
<div class="a" style="left:836px;top:413.8px;width:15.600000000000023px;height:13.699999999999989px;background:#f3f4f6;border-radius:4px"></div>
<div class="a" style="left:841.30px;top:416.28px;font-size:9.2px;color:#374151;font-weight:400;-webkit-text-stroke:0.3px #374151;">0</div>
<div class="a" style="left:869px;top:407.5px;width:62.5px;height:25.5px;border:1px solid #e6e7ea;border-radius:6px;background:#fafafa"></div>
<div class="a" style="left:903.8px;top:413.8px;width:16.200000000000045px;height:13.699999999999989px;background:#f3f4f6;border-radius:4px"></div>
<div class="a" style="left:909.40px;top:416.28px;font-size:9.2px;color:#374151;font-weight:400;-webkit-text-stroke:0.3px #374151;">4</div>
<svg style="left:0;top:0" width="1" height="1"><path d="M879.6 415.4H890.4V423.6H883.4L880.3 426V423.6H879.6Z" fill="none" stroke="#374151" stroke-width="1.3" stroke-linejoin="round"/><path d="M885 417.6V419.9" stroke="#374151" stroke-width="1.2" stroke-linecap="round"/><circle cx="885" cy="421.9" r="0.7" fill="#374151"/></svg>
<div class="a" style="left:940.5px;top:407.5px;width:154.0px;height:26.19999999999999px;border:1px solid #e3e5e8;border-radius:6px;background:#fff"></div>
<svg style="left:0;top:0" width="1" height="1"><circle cx="954.4" cy="419.6" r="3.5" fill="none" stroke="#6b7280" stroke-width="1.2"/><path d="M957 422.2L959.8 425" stroke="#6b7280" stroke-width="1.2" stroke-linecap="round"/></svg>
<div class="a" style="left:969.00px;top:415.51px;font-size:10.6px;color:#6b7280;font-weight:400;">Search by title/messag</div>
<div class="a" style="left:526.00px;top:446.04px;font-size:12px;color:#1f2937;font-weight:400;">sort by:</div>
<div class="a" style="left:568.80px;top:446.14px;font-size:11.8px;color:#6366f1;font-weight:400;">suite</div>
<div class="a" style="left:597.00px;top:446.04px;font-size:12px;color:#1f2937;font-weight:400;">/</div>
<div class="a" style="left:604.00px;top:446.14px;font-size:11.8px;color:#6366f1;font-weight:400;">testcase</div>
<div class="a" style="left:652.20px;top:446.04px;font-size:12px;color:#1f2937;font-weight:400;">/</div>
<div class="a" style="left:658.80px;top:446.14px;font-size:11.8px;color:#6366f1;font-weight:400;">failure</div>
<div class="a" style="left:568.8px;top:458.5px;width:25.0px;height:1.0px;border-top:1px dotted #a5a8f4"></div>
<div class="a" style="left:604px;top:458.5px;width:44px;height:1.0px;border-top:1px dotted #a5a8f4"></div>
<div class="a" style="left:658.8px;top:458.5px;width:32.5px;height:1.0px;border-top:1px dotted #a5a8f4"></div>
<div class="a" style="left:1141px;top:442px;width:93px;height:19.399999999999977px;border:1px solid #e6e7ea;border-radius:5px;background:#fafafa"></div>
<svg style="left:0;top:0" width="1" height="1"><g fill="none" stroke="#333" stroke-width="1.1"><path d="M1155.8 454.6H1149.6Q1148.6 454.6 1148.6 453.6V447.8Q1148.6 446.8 1149.6 446.8H1155.6Q1156.6 446.8 1156.6 447.8V450.6"/><path d="M1148.6 449.3H1156.6M1148.6 451.9H1153.4M1152.2 446.8V454.6"/></g><circle cx="1156.3" cy="454.3" r="2.1" fill="#333"/><circle cx="1156.3" cy="454.3" r="0.7" fill="#fafafa"/><g fill="none" stroke="#9ca3af" stroke-width="1"><path d="M1241.8 449H1251.4M1241.8 453.6H1251.4"/><circle cx="1248" cy="449" r="1.5" fill="#fff"/><circle cx="1245" cy="453.6" r="1.5" fill="#fff"/></g></svg>
<div class="a" style="left:1164.60px;top:446.51px;font-size:10.6px;color:#2d2d2d;font-weight:400;">Custom view</div>
<div class="a" style="left:1252.8px;top:467px;width:4.100000000000136px;height:223px;background:#c7d2fe;border-radius:2px"></div>
<div class="a" style="left:515px;top:466px;width:735px;height:241.5px;overflow:hidden">
<div class="a" style="left:45.80px;top:9.15px;font-size:9.9px;color:#6b7280;font-weight:400;font-family:'Liberation Mono',monospace;-webkit-text-stroke:0.12px currentColor;">@first Create To…</div>
<div class="a" style="left:178.60px;top:8.14px;font-size:12px;color:#1a1f29;font-weight:400;transform-origin:0 0;transform:scaleX(0.9833);">Create a new todo item</div>
<div class="a" style="left:45.80px;top:31.60px;font-size:9.9px;color:#6b7280;font-weight:400;font-family:'Liberation Mono',monospace;-webkit-text-stroke:0.12px currentColor;">@first Create To…</div>
<div class="a" style="left:178.60px;top:30.59px;font-size:12px;color:#1a1f29;font-weight:400;transform-origin:0 0;transform:scaleX(0.9900);">Create multiple todo items</div>
<div class="a" style="left:45.80px;top:54.05px;font-size:9.9px;color:#6b7280;font-weight:400;font-family:'Liberation Mono',monospace;-webkit-text-stroke:0.12px currentColor;">@first Create To…</div>
<div class="a" style="left:178.60px;top:53.04px;font-size:12px;color:#1a1f29;font-weight:400;transform-origin:0 0;transform:scaleX(0.9976);">Todos containing weird characters</div>
<div class="a" style="left:45.80px;top:76.50px;font-size:9.9px;color:#6b7280;font-weight:400;font-family:'Liberation Mono',monospace;-webkit-text-stroke:0.12px currentColor;">@first Create To…</div>
<div class="a" style="left:178.60px;top:75.49px;font-size:12px;color:#1a1f29;font-weight:400;transform-origin:0 0;transform:scaleX(0.9976);">Todos containing weird characters</div>
<div class="a" style="left:45.80px;top:98.95px;font-size:9.9px;color:#6b7280;font-weight:400;font-family:'Liberation Mono',monospace;-webkit-text-stroke:0.12px currentColor;">@first Create To…</div>
<div class="a" style="left:178.60px;top:97.94px;font-size:12px;color:#1a1f29;font-weight:400;transform-origin:0 0;transform:scaleX(0.9976);">Todos containing weird characters</div>
<div class="a" style="left:45.80px;top:121.40px;font-size:9.9px;color:#6b7280;font-weight:400;font-family:'Liberation Mono',monospace;-webkit-text-stroke:0.12px currentColor;">@first Create To…</div>
<div class="a" style="left:178.60px;top:120.39px;font-size:12px;color:#1a1f29;font-weight:400;transform-origin:0 0;transform:scaleX(0.9962);">Text input field should be cleared after each item</div>
<div class="a" style="left:45.80px;top:143.85px;font-size:9.9px;color:#6b7280;font-weight:400;font-family:'Liberation Mono',monospace;-webkit-text-stroke:0.12px currentColor;">@first Create To…</div>
<div class="a" style="left:178.60px;top:142.84px;font-size:12px;color:#1a1f29;font-weight:400;transform-origin:0 0;transform:scaleX(1.0006);">Text input should be trimmed</div>
<div class="a" style="left:45.80px;top:166.30px;font-size:9.9px;color:#6b7280;font-weight:400;font-family:'Liberation Mono',monospace;-webkit-text-stroke:0.12px currentColor;">@first Create To…</div>
<div class="a" style="left:178.60px;top:165.29px;font-size:12px;color:#1a1f29;font-weight:400;transform-origin:0 0;transform:scaleX(0.9963);">New todos should be added to the bottom of the list</div>
<div class="a" style="left:45.80px;top:188.75px;font-size:9.9px;color:#6b7280;font-weight:400;font-family:'Liberation Mono',monospace;-webkit-text-stroke:0.12px currentColor;">@first Create To…</div>
<div class="a" style="left:178.60px;top:187.74px;font-size:12px;color:#1a1f29;font-weight:400;transform-origin:0 0;transform:scaleX(0.9806);">Footer should be visible when adding TODOs</div>
<div class="a" style="left:45.80px;top:211.20px;font-size:9.9px;color:#6b7280;font-weight:400;font-family:'Liberation Mono',monospace;-webkit-text-stroke:0.12px currentColor;">Mark as complete…</div>
<div class="a" style="left:178.60px;top:210.19px;font-size:12px;color:#1a1f29;font-weight:400;transform-origin:0 0;transform:scaleX(0.9958);">Mark todos as completed</div>
<div class="a" style="left:45.80px;top:233.65px;font-size:9.9px;color:#6b7280;font-weight:400;font-family:'Liberation Mono',monospace;-webkit-text-stroke:0.12px currentColor;">Mark as complete…</div>
<div class="a" style="left:178.60px;top:232.64px;font-size:12px;color:#1a1f29;font-weight:400;transform-origin:0 0;transform:scaleX(0.9933);">Unmark completed todos</div>
<svg style="left:0;top:0" width="1" height="1"><circle cx="15.8" cy="13.5" r="4.3" fill="#22b573"/><path d="M13.8 13.6L15.3 15.0L17.900000000000002 12.1" fill="none" stroke="#fff" stroke-width="1.3" stroke-linecap="round" stroke-linejoin="round"/><g fill="none" stroke="#6b7280" stroke-width="1.2" stroke-linejoin="round"><path d="M30 8.9H29.4Q28.7 8.9 28.7 9.6V18.3Q28.7 19.0 29.4 19.0H37.4Q38.1 19.0 38.1 18.3V9.6Q38.1 8.9 37.4 8.9H36.8"/><rect x="30.8" y="7.9" width="5.2" height="2" rx="0.6"/></g><g stroke="#6b7280" stroke-width="1"><path d="M31 12.3V13.7M31 15.7V17.1M33.2 13.0H35.8M33.2 16.4H35.8"/></g><rect x="162.8" y="7.1" width="13.2" height="13" rx="3.5" fill="#f3eefe"/><g fill="none" stroke="#7c3aed" stroke-width="1.25" stroke-linecap="round"><path d="M174.0 13.3A4.6 4.6 0 1 0 169.6 18.1"/><path d="M171.8 13.4A2.4 2.4 0 1 0 169.5 15.9"/><path d="M172.0 16.1L174.0 18.1" stroke="#6d28d9" stroke-width="1.5"/></g><path d="M169.6 13.7L173.6 15.0L170.9 17.7Z" fill="#6d28d9" stroke="#6d28d9" stroke-width="0.6" stroke-linejoin="round"/><circle cx="15.8" cy="35.94999999999999" r="4.3" fill="#22b573"/><path d="M13.8 36.04999999999999L15.3 37.44999999999999L17.900000000000002 34.54999999999999" fill="none" stroke="#fff" stroke-width="1.3" stroke-linecap="round" stroke-linejoin="round"/><g fill="none" stroke="#6b7280" stroke-width="1.2" stroke-linejoin="round"><path d="M30 31.349999999999987H29.4Q28.7 31.349999999999987 28.7 32.04999999999999V40.749999999999986Q28.7 41.44999999999999 29.4 41.44999999999999H37.4Q38.1 41.44999999999999 38.1 40.749999999999986V32.04999999999999Q38.1 31.349999999999987 37.4 31.349999999999987H36.8"/><rect x="30.8" y="30.349999999999987" width="5.2" height="2" rx="0.6"/></g><g stroke="#6b7280" stroke-width="1"><path d="M31 34.749999999999986V36.14999999999999M31 38.14999999999999V39.54999999999999M33.2 35.44999999999999H35.8M33.2 38.84999999999999H35.8"/></g><rect x="162.8" y="29.54999999999999" width="13.2" height="13" rx="3.5" fill="#f3eefe"/><g fill="none" stroke="#7c3aed" stroke-width="1.25" stroke-linecap="round"><path d="M174.0 35.749999999999986A4.6 4.6 0 1 0 169.6 40.54999999999999"/><path d="M171.8 35.84999999999999A2.4 2.4 0 1 0 169.5 38.34999999999999"/><path d="M172.0 38.54999999999999L174.0 40.54999999999999" stroke="#6d28d9" stroke-width="1.5"/></g><path d="M169.6 36.14999999999999L173.6 37.44999999999999L170.9 40.14999999999999Z" fill="#6d28d9" stroke="#6d28d9" stroke-width="0.6" stroke-linejoin="round"/><circle cx="15.8" cy="58.39999999999998" r="4.3" fill="#22b573"/><path d="M13.8 58.49999999999998L15.3 59.89999999999998L17.900000000000002 56.99999999999998" fill="none" stroke="#fff" stroke-width="1.3" stroke-linecap="round" stroke-linejoin="round"/><g fill="none" stroke="#6b7280" stroke-width="1.2" stroke-linejoin="round"><path d="M30 53.799999999999976H29.4Q28.7 53.799999999999976 28.7 54.49999999999998V63.199999999999974Q28.7 63.89999999999998 29.4 63.89999999999998H37.4Q38.1 63.89999999999998 38.1 63.199999999999974V54.49999999999998Q38.1 53.799999999999976 37.4 53.799999999999976H36.8"/><rect x="30.8" y="52.799999999999976" width="5.2" height="2" rx="0.6"/></g><g stroke="#6b7280" stroke-width="1"><path d="M31 57.199999999999974V58.59999999999998M31 60.59999999999998V61.99999999999998M33.2 57.89999999999998H35.8M33.2 61.299999999999976H35.8"/></g><rect x="162.8" y="51.99999999999998" width="13.2" height="13" rx="3.5" fill="#f3eefe"/><g fill="none" stroke="#7c3aed" stroke-width="1.25" stroke-linecap="round"><path d="M174.0 58.199999999999974A4.6 4.6 0 1 0 169.6 62.99999999999998"/><path d="M171.8 58.299999999999976A2.4 2.4 0 1 0 169.5 60.799999999999976"/><path d="M172.0 60.99999999999998L174.0 62.99999999999998" stroke="#6d28d9" stroke-width="1.5"/></g><path d="M169.6 58.59999999999998L173.6 59.89999999999998L170.9 62.59999999999998Z" fill="#6d28d9" stroke="#6d28d9" stroke-width="0.6" stroke-linejoin="round"/><circle cx="15.8" cy="80.85000000000002" r="4.3" fill="#22b573"/><path d="M13.8 80.95000000000002L15.3 82.35000000000002L17.900000000000002 79.45000000000002" fill="none" stroke="#fff" stroke-width="1.3" stroke-linecap="round" stroke-linejoin="round"/><g fill="none" stroke="#6b7280" stroke-width="1.2" stroke-linejoin="round"><path d="M30 76.25000000000003H29.4Q28.7 76.25000000000003 28.7 76.95000000000002V85.65000000000002Q28.7 86.35000000000002 29.4 86.35000000000002H37.4Q38.1 86.35000000000002 38.1 85.65000000000002V76.95000000000002Q38.1 76.25000000000003 37.4 76.25000000000003H36.8"/><rect x="30.8" y="75.25000000000003" width="5.2" height="2" rx="0.6"/></g><g stroke="#6b7280" stroke-width="1"><path d="M31 79.65000000000002V81.05000000000003M31 83.05000000000003V84.45000000000002M33.2 80.35000000000002H35.8M33.2 83.75000000000003H35.8"/></g><rect x="162.8" y="74.45000000000002" width="13.2" height="13" rx="3.5" fill="#f3eefe"/><g fill="none" stroke="#7c3aed" stroke-width="1.25" stroke-linecap="round"><path d="M174.0 80.65000000000002A4.6 4.6 0 1 0 169.6 85.45000000000002"/><path d="M171.8 80.75000000000003A2.4 2.4 0 1 0 169.5 83.25000000000003"/><path d="M172.0 83.45000000000002L174.0 85.45000000000002" stroke="#6d28d9" stroke-width="1.5"/></g><path d="M169.6 81.05000000000003L173.6 82.35000000000002L170.9 85.05000000000003Z" fill="#6d28d9" stroke="#6d28d9" stroke-width="0.6" stroke-linejoin="round"/><circle cx="15.8" cy="103.29999999999995" r="4.3" fill="#22b573"/><path d="M13.8 103.39999999999995L15.3 104.79999999999995L17.900000000000002 101.89999999999995" fill="none" stroke="#fff" stroke-width="1.3" stroke-linecap="round" stroke-linejoin="round"/><g fill="none" stroke="#6b7280" stroke-width="1.2" stroke-linejoin="round"><path d="M30 98.69999999999996H29.4Q28.7 98.69999999999996 28.7 99.39999999999995V108.09999999999995Q28.7 108.79999999999995 29.4 108.79999999999995H37.4Q38.1 108.79999999999995 38.1 108.09999999999995V99.39999999999995Q38.1 98.69999999999996 37.4 98.69999999999996H36.8"/><rect x="30.8" y="97.69999999999996" width="5.2" height="2" rx="0.6"/></g><g stroke="#6b7280" stroke-width="1"><path d="M31 102.09999999999995V103.49999999999996M31 105.49999999999996V106.89999999999995M33.2 102.79999999999995H35.8M33.2 106.19999999999996H35.8"/></g><rect x="162.8" y="96.89999999999995" width="13.2" height="13" rx="3.5" fill="#f3eefe"/><g fill="none" stroke="#7c3aed" stroke-width="1.25" stroke-linecap="round"><path d="M174.0 103.09999999999995A4.6 4.6 0 1 0 169.6 107.89999999999995"/><path d="M171.8 103.19999999999996A2.4 2.4 0 1 0 169.5 105.69999999999996"/><path d="M172.0 105.89999999999995L174.0 107.89999999999995" stroke="#6d28d9" stroke-width="1.5"/></g><path d="M169.6 103.49999999999996L173.6 104.79999999999995L170.9 107.49999999999996Z" fill="#6d28d9" stroke="#6d28d9" stroke-width="0.6" stroke-linejoin="round"/><circle cx="15.8" cy="125.75" r="4.3" fill="#22b573"/><path d="M13.8 125.85L15.3 127.25L17.900000000000002 124.35" fill="none" stroke="#fff" stroke-width="1.3" stroke-linecap="round" stroke-linejoin="round"/><g fill="none" stroke="#6b7280" stroke-width="1.2" stroke-linejoin="round"><path d="M30 121.15H29.4Q28.7 121.15 28.7 121.85V130.55Q28.7 131.25 29.4 131.25H37.4Q38.1 131.25 38.1 130.55V121.85Q38.1 121.15 37.4 121.15H36.8"/><rect x="30.8" y="120.15" width="5.2" height="2" rx="0.6"/></g><g stroke="#6b7280" stroke-width="1"><path d="M31 124.55V125.95M31 127.95V129.35M33.2 125.25H35.8M33.2 128.65H35.8"/></g><rect x="162.8" y="119.35" width="13.2" height="13" rx="3.5" fill="#f3eefe"/><g fill="none" stroke="#7c3aed" stroke-width="1.25" stroke-linecap="round"><path d="M174.0 125.55A4.6 4.6 0 1 0 169.6 130.35"/><path d="M171.8 125.65A2.4 2.4 0 1 0 169.5 128.15"/><path d="M172.0 128.35L174.0 130.35" stroke="#6d28d9" stroke-width="1.5"/></g><path d="M169.6 125.95L173.6 127.25L170.9 129.95Z" fill="#6d28d9" stroke="#6d28d9" stroke-width="0.6" stroke-linejoin="round"/><circle cx="15.8" cy="148.20000000000005" r="4.2" fill="#ef4444"/><rect x="13.8" y="147.50000000000006" width="4" height="1.4" fill="#fff"/><g fill="none" stroke="#6b7280" stroke-width="1.2" stroke-linejoin="round"><path d="M30 143.60000000000005H29.4Q28.7 143.60000000000005 28.7 144.30000000000004V153.00000000000006Q28.7 153.70000000000005 29.4 153.70000000000005H37.4Q38.1 153.70000000000005 38.1 153.00000000000006V144.30000000000004Q38.1 143.60000000000005 37.4 143.60000000000005H36.8"/><rect x="30.8" y="142.60000000000005" width="5.2" height="2" rx="0.6"/></g><g stroke="#6b7280" stroke-width="1"><path d="M31 147.00000000000006V148.40000000000003M31 150.40000000000003V151.80000000000004M33.2 147.70000000000005H35.8M33.2 151.10000000000005H35.8"/></g><rect x="162.8" y="141.80000000000004" width="13.2" height="13" rx="3.5" fill="#f3eefe"/><g fill="none" stroke="#7c3aed" stroke-width="1.25" stroke-linecap="round"><path d="M174.0 148.00000000000006A4.6 4.6 0 1 0 169.6 152.80000000000004"/><path d="M171.8 148.10000000000005A2.4 2.4 0 1 0 169.5 150.60000000000005"/><path d="M172.0 150.80000000000004L174.0 152.80000000000004" stroke="#6d28d9" stroke-width="1.5"/></g><path d="M169.6 148.40000000000003L173.6 149.70000000000005L170.9 152.40000000000003Z" fill="#6d28d9" stroke="#6d28d9" stroke-width="0.6" stroke-linejoin="round"/><circle cx="15.8" cy="170.64999999999998" r="4.2" fill="#ef4444"/><rect x="13.8" y="169.95" width="4" height="1.4" fill="#fff"/><g fill="none" stroke="#6b7280" stroke-width="1.2" stroke-linejoin="round"><path d="M30 166.04999999999998H29.4Q28.7 166.04999999999998 28.7 166.74999999999997V175.45Q28.7 176.14999999999998 29.4 176.14999999999998H37.4Q38.1 176.14999999999998 38.1 175.45V166.74999999999997Q38.1 166.04999999999998 37.4 166.04999999999998H36.8"/><rect x="30.8" y="165.04999999999998" width="5.2" height="2" rx="0.6"/></g><g stroke="#6b7280" stroke-width="1"><path d="M31 169.45V170.84999999999997M31 172.84999999999997V174.24999999999997M33.2 170.14999999999998H35.8M33.2 173.54999999999998H35.8"/></g><rect x="162.8" y="164.24999999999997" width="13.2" height="13" rx="3.5" fill="#f3eefe"/><g fill="none" stroke="#7c3aed" stroke-width="1.25" stroke-linecap="round"><path d="M174.0 170.45A4.6 4.6 0 1 0 169.6 175.24999999999997"/><path d="M171.8 170.54999999999998A2.4 2.4 0 1 0 169.5 173.04999999999998"/><path d="M172.0 173.24999999999997L174.0 175.24999999999997" stroke="#6d28d9" stroke-width="1.5"/></g><path d="M169.6 170.84999999999997L173.6 172.14999999999998L170.9 174.84999999999997Z" fill="#6d28d9" stroke="#6d28d9" stroke-width="0.6" stroke-linejoin="round"/><circle cx="15.8" cy="193.10000000000002" r="4.3" fill="#22b573"/><path d="M13.8 193.20000000000002L15.3 194.60000000000002L17.900000000000002 191.70000000000002" fill="none" stroke="#fff" stroke-width="1.3" stroke-linecap="round" stroke-linejoin="round"/><g fill="none" stroke="#6b7280" stroke-width="1.2" stroke-linejoin="round"><path d="M30 188.50000000000003H29.4Q28.7 188.50000000000003 28.7 189.20000000000002V197.90000000000003Q28.7 198.60000000000002 29.4 198.60000000000002H37.4Q38.1 198.60000000000002 38.1 197.90000000000003V189.20000000000002Q38.1 188.50000000000003 37.4 188.50000000000003H36.8"/><rect x="30.8" y="187.50000000000003" width="5.2" height="2" rx="0.6"/></g><g stroke="#6b7280" stroke-width="1"><path d="M31 191.90000000000003V193.3M31 195.3V196.70000000000002M33.2 192.60000000000002H35.8M33.2 196.00000000000003H35.8"/></g><rect x="162.8" y="186.70000000000002" width="13.2" height="13" rx="3.5" fill="#f3eefe"/><g fill="none" stroke="#7c3aed" stroke-width="1.25" stroke-linecap="round"><path d="M174.0 192.90000000000003A4.6 4.6 0 1 0 169.6 197.70000000000002"/><path d="M171.8 193.00000000000003A2.4 2.4 0 1 0 169.5 195.50000000000003"/><path d="M172.0 195.70000000000002L174.0 197.70000000000002" stroke="#6d28d9" stroke-width="1.5"/></g><path d="M169.6 193.3L173.6 194.60000000000002L170.9 197.3Z" fill="#6d28d9" stroke="#6d28d9" stroke-width="0.6" stroke-linejoin="round"/><circle cx="15.8" cy="215.54999999999995" r="4.3" fill="#22b573"/><path d="M13.8 215.64999999999995L15.3 217.04999999999995L17.900000000000002 214.14999999999995" fill="none" stroke="#fff" stroke-width="1.3" stroke-linecap="round" stroke-linejoin="round"/><g fill="none" stroke="#6b7280" stroke-width="1.2" stroke-linejoin="round"><path d="M30 210.94999999999996H29.4Q28.7 210.94999999999996 28.7 211.64999999999995V220.34999999999997Q28.7 221.04999999999995 29.4 221.04999999999995H37.4Q38.1 221.04999999999995 38.1 220.34999999999997V211.64999999999995Q38.1 210.94999999999996 37.4 210.94999999999996H36.8"/><rect x="30.8" y="209.94999999999996" width="5.2" height="2" rx="0.6"/></g><g stroke="#6b7280" stroke-width="1"><path d="M31 214.34999999999997V215.74999999999994M31 217.74999999999994V219.14999999999995M33.2 215.04999999999995H35.8M33.2 218.44999999999996H35.8"/></g><rect x="162.8" y="209.14999999999995" width="13.2" height="13" rx="3.5" fill="#f3eefe"/><g fill="none" stroke="#7c3aed" stroke-width="1.25" stroke-linecap="round"><path d="M174.0 215.34999999999997A4.6 4.6 0 1 0 169.6 220.14999999999995"/><path d="M171.8 215.44999999999996A2.4 2.4 0 1 0 169.5 217.94999999999996"/><path d="M172.0 218.14999999999995L174.0 220.14999999999995" stroke="#6d28d9" stroke-width="1.5"/></g><path d="M169.6 215.74999999999994L173.6 217.04999999999995L170.9 219.74999999999994Z" fill="#6d28d9" stroke="#6d28d9" stroke-width="0.6" stroke-linejoin="round"/><circle cx="15.8" cy="238.0" r="4.3" fill="#22b573"/><path d="M13.8 238.1L15.3 239.5L17.900000000000002 236.6" fill="none" stroke="#fff" stroke-width="1.3" stroke-linecap="round" stroke-linejoin="round"/><g fill="none" stroke="#6b7280" stroke-width="1.2" stroke-linejoin="round"><path d="M30 233.4H29.4Q28.7 233.4 28.7 234.1V242.8Q28.7 243.5 29.4 243.5H37.4Q38.1 243.5 38.1 242.8V234.1Q38.1 233.4 37.4 233.4H36.8"/><rect x="30.8" y="232.4" width="5.2" height="2" rx="0.6"/></g><g stroke="#6b7280" stroke-width="1"><path d="M31 236.8V238.2M31 240.2V241.6M33.2 237.5H35.8M33.2 240.9H35.8"/></g><rect x="162.8" y="231.6" width="13.2" height="13" rx="3.5" fill="#f3eefe"/><g fill="none" stroke="#7c3aed" stroke-width="1.25" stroke-linecap="round"><path d="M174.0 237.8A4.6 4.6 0 1 0 169.6 242.6"/><path d="M171.8 237.9A2.4 2.4 0 1 0 169.5 240.4"/><path d="M172.0 240.6L174.0 242.6" stroke="#6d28d9" stroke-width="1.5"/></g><path d="M169.6 238.2L173.6 239.5L170.9 242.2Z" fill="#6d28d9" stroke="#6d28d9" stroke-width="0.6" stroke-linejoin="round"/></svg>
</div>
</div>
</div>
</body></html>
